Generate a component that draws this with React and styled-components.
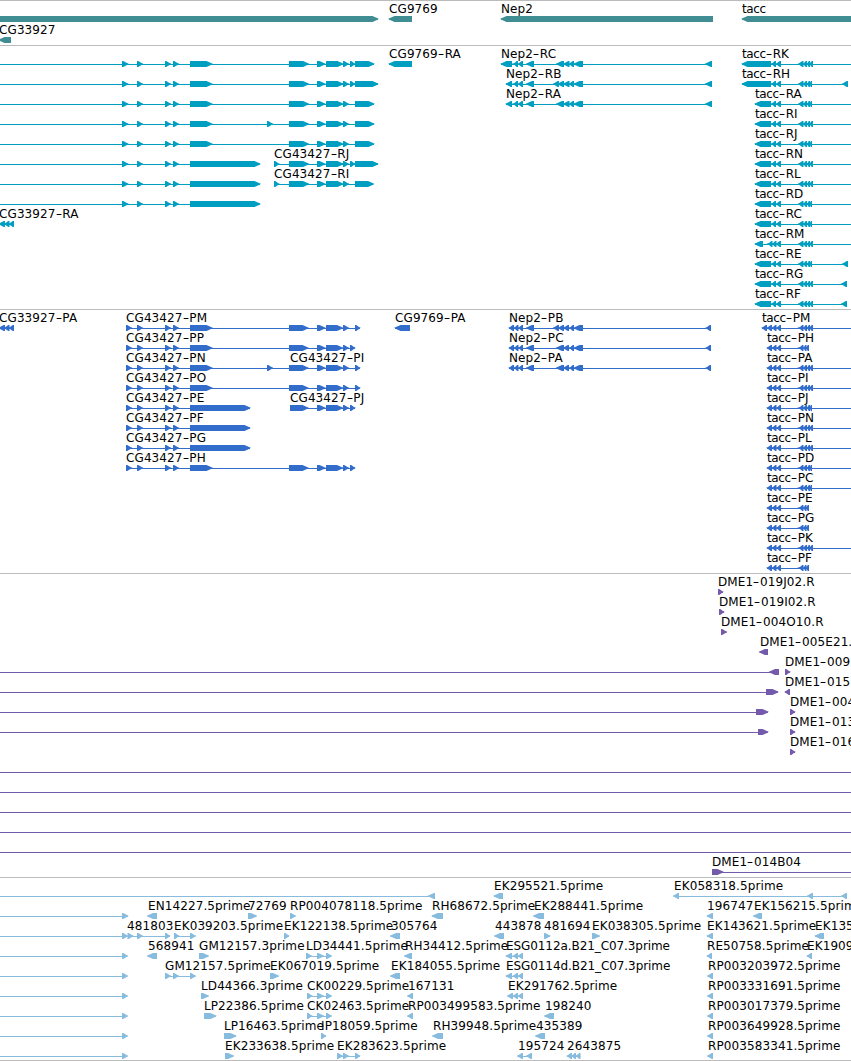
import React from 'react';
import styled, { createGlobalStyle } from 'styled-components';

const OFF = 870;

// feature helper: exons are given as "start,end start,end ..."
const feature = (dir, exons, label, opts = {}) => ({
  dir,
  label,
  exons: exons.split(' ').filter(Boolean).map(pair => pair.split(',').map(Number)),
  ...opts,
});
const fwd = (exons, label, opts) => feature('right', exons, label, opts);
const rev = (exons, label, opts) => feature('left', exons, label, opts);

const fromLeft = { from: -10 };
const toRight = { to: OFF };

const genes = [
  [
    fwd('-10,378'),
    rev('389,412', 'CG9769'),
    rev('501,713', 'Nep2'),
    rev(`742,${OFF}`, 'tacc'),
  ],
  [rev('-1,11', 'CG33927')],
];

const HEAD = '122,128 137,142.5 165,170.5 173,178.5';
const MID = '190,212';
const LONG = '190,260';
const TAIL = '289,308.5 317,325 326,343 343,348.5';
const NEP_R = '513.5,518 518,523 526.5,534';
const NEP_R_END = '563.5,569.5 569,574 574,583 705.5,712';
const CLUSTER = '798.5,803.5 803,807 806.5,810';
const taccR = (name, last, opts = toRight, end = '') => (
  rev(`755,771 771.5,776 776,781 ${CLUSTER} 809,${last} ${end}`, name, opts)
);

const transcripts = [
  [
    fwd(`${HEAD} ${MID} ${TAIL} 350,355 355,374`, null, fromLeft),
    rev('389,412', 'CG9769-RA'),
    rev(`501,512 ${NEP_R} 556.5,564 ${NEP_R_END}`, 'Nep2-RC'),
    rev(`742,771 771.5,776 776,781 ${CLUSTER} 809,813`, 'tacc-RK', toRight),
  ],
  [
    fwd(`${HEAD} ${MID} ${TAIL} 350,355 355,378`, null, fromLeft),
    rev(`506,512 ${NEP_R} 553.5,559 558,564 ${NEP_R_END}`, 'Nep2-RB'),
    rev(`742,771 771.5,776 776,781 ${CLUSTER} 809,812 842.5,848`, 'tacc-RH'),
  ],
  [
    fwd(`${HEAD} ${MID} ${TAIL} 355,374`, null, fromLeft),
    rev(`506,512 ${NEP_R} 556.5,564 ${NEP_R_END}`, 'Nep2-RA'),
    taccR('tacc-RA', 812),
  ],
  [
    fwd(`${HEAD} ${MID} 267,272.5 ${TAIL} 355,374`, null, fromLeft),
    taccR('tacc-RI', 813),
  ],
  [
    fwd(`${HEAD} ${MID} ${TAIL} 355,374`, null, fromLeft),
    taccR('tacc-RJ', 812),
  ],
  [
    fwd(`${HEAD} ${LONG}`, null, fromLeft),
    fwd(`274,279 ${TAIL} 350,355 355,378`, 'CG43427-RJ'),
    taccR('tacc-RN', 813),
  ],
  [
    fwd(`${HEAD} ${LONG}`, null, fromLeft),
    fwd(`274,279 ${TAIL} 355,373.5`, 'CG43427-RI'),
    taccR('tacc-RL', 813),
  ],
  [fwd(`${HEAD} ${LONG}`, null, fromLeft), taccR('tacc-RD', 812)],
  [rev('-1,5 4.5,9.5 9,14', 'CG33927-RA'), taccR('tacc-RC', 812)],
  [rev(`755,763 768,772.5 772,776.5 776,781 ${CLUSTER} 809,813`, 'tacc-RM', toRight)],
  [taccR('tacc-RE', 812, {}, '842.5,848')],
  [taccR('tacc-RG', 813, {}, '841.5,847')],
  [taccR('tacc-RF', 813, {}, '841.5,847')],
];

const P_HEAD = '126,131.5 137,142.5 165,170.5 173,178.5';
const P_TAIL = '317,325 326,342.5 343,348.5';
const P_NEP = '509,514 514,518.5 518.5,523 526.5,534';
const P_NEP_END = '563.5,569 569.5,574 574,583 706,711';
const P_TACC = '767,772 772,776.5 776.5,781';
const cgP = (name, end, extra = '') => (
  fwd(`${P_HEAD} ${MID} ${extra} 289,308 ${P_TAIL} ${end}`, name)
);
const cgShort = name => fwd(`${P_HEAD} 190,250`, name);
const taccP = (name, last) => (
  rev(`${P_TACC} 799,803.5 803,807 806.5,810 809,${last}`, name, toRight)
);
const taccShort = name => rev(`${P_TACC} 799,803.5 803,806.5 805.5,809`, name);

const proteins = [
  [
    rev('-1,5 4.5,9.5 9,14', 'CG33927-PA'),
    cgP('CG43427-PM', '355,360'),
    rev('395,410', 'CG9769-PA'),
    rev(`${P_NEP} 553.5,559 558.5,564 ${P_NEP_END}`, 'Nep2-PB'),
    rev(`762,767 ${P_TACC} 799,803.5 803,807 806.5,810 809,813`, 'tacc-PM', toRight),
  ],
  [
    cgP('CG43427-PP', '350,355'),
    rev(`${P_NEP} 556.5,564 ${P_NEP_END}`, 'Nep2-PC'),
    taccShort('tacc-PH'),
  ],
  [
    cgP('CG43427-PN', '355,360', '267,272.5'),
    fwd('', 'CG43427-PI', { at: 290 }),
    rev(`${P_NEP} 556.5,564 ${P_NEP_END}`, 'Nep2-PA'),
    taccP('tacc-PA', 813),
  ],
  [cgP('CG43427-PO', '355,360'), taccP('tacc-PI', 813)],
  [
    cgShort('CG43427-PE'),
    fwd(`290,308 ${P_TAIL} 350,355`, 'CG43427-PJ'),
    taccP('tacc-PJ', 812),
  ],
  [cgShort('CG43427-PF'), taccP('tacc-PN', 813)],
  [cgShort('CG43427-PG'), taccP('tacc-PL', 813)],
  [cgP('CG43427-PH', '350,355'), taccP('tacc-PD', 812)],
  [taccP('tacc-PC', 812)],
  [taccShort('tacc-PE')],
  [taccShort('tacc-PG')],
  [taccP('tacc-PK', 813)],
  [taccShort('tacc-PF')],
];

const spanning = [fwd('', null, { from: -10, to: OFF })];

const clones = [
  [fwd('718,723', 'DME1-019J02.R')],
  [fwd('719,724', 'DME1-019I02.R')],
  [fwd('721,726.5', 'DME1-004O10.R')],
  [rev('759.5,768', 'DME1-005E21.')],
  [rev('769.5,779', null, fromLeft), fwd('785,790', 'DME1-009')],
  [fwd('766,778', null, fromLeft), rev('785,790', 'DME1-015')],
  [fwd('756,768', null, fromLeft), fwd('790,795', 'DME1-004')],
  [fwd('758,768', null, fromLeft), fwd('790,795', 'DME1-013')],
  [fwd('790,795', 'DME1-016')],
  spanning,
  spanning,
  spanning,
  spanning,
  spanning,
  [fwd('712,723', 'DME1-014B04', toRight)],
];

const lead = fwd('122,127.5', null, fromLeft);

const ests = [
  [
    rev('428.5,435', null, fromLeft),
    rev('494,503', 'EK295521.5prime'),
    rev('673.5,679 807.5,813 841.5,847', 'EK058318.5prime'),
  ],
  [
    fwd('122,128', null, fromLeft),
    rev('147.5,157', 'EN14227.5prime'),
    fwd('248,256.5', '72769'),
    fwd('290,295.5', 'RP004078118.5prime'),
    rev('432,443', 'RH68672.5prime'),
    rev('533.5,544', 'EK288441.5prime'),
    rev('707,713', '196747'),
    rev('753.5,762', 'EK156215.5prime'),
  ],
  [
    lead,
    fwd('127.5,133 137,142.5 165,170', '481803', { at: 127 }),
    fwd('174,179 190,195.5', 'EK039203.5prime'),
    fwd('284,289', 'EK122138.5prime'),
    rev('390.5,400', '305764'),
    rev('494.5,504', '443878'),
    fwd('544,550', '481694'),
    fwd('592,599.5', 'EK038305.5prime'),
    rev('707,713', 'EK143621.5prime'),
    rev('815,824', 'EK135'),
  ],
  [
    lead,
    rev('147.5,157', '568941'),
    fwd('199,208.5', 'GM12157.3prime'),
    fwd('306,311.5 317,323.5 326,331.5', 'LD34441.5prime'),
    rev('404.5,412', 'RH34412.5prime'),
    rev('506,512 513,518 518,523', 'ESG0112a.B21_C07.3prime'),
    rev('707,712', 'RE50758.5prime'),
    rev('807,812', 'EK1909'),
  ],
  [
    lead,
    fwd('165,170.5 173,178.5 190,195.5', 'GM12157.5prime'),
    fwd('270,278.5', 'EK067019.5prime'),
    rev('390.5,400', 'EK184055.5prime'),
    rev('506,512 513,518 518,523', 'ESG0114d.B21_C07.3prime'),
    rev('707.5,713', 'RP003203972.5prime'),
  ],
  [
    lead,
    fwd('201,208.5', 'LD44366.3prime'),
    fwd('307,312 317,323.5 326,331.5', 'CK00229.5prime'),
    rev('407.5,413', '167131'),
    rev('507.5,513 513,518 518,523', 'EK291762.5prime'),
    rev('707.5,713', 'RP003331691.5prime'),
  ],
  [
    lead,
    fwd('204,216', 'LP22386.5prime'),
    fwd('307,312 317,323.5 326,331.5', 'CK02463.5prime'),
    rev('407.5,413', 'RP003499583.5prime'),
    rev('544.5,554', '198240'),
    rev('707.5,713', 'RP003017379.5prime'),
  ],
  [
    lead,
    fwd('224,236', 'LP16463.5prime'),
    fwd('321,326', 'IP18059.5prime'),
    rev('432.5,443', 'RH39948.5prime'),
    rev('535.5,545', '435389'),
    rev('707.5,713', 'RP003649928.5prime'),
  ],
  [
    lead,
    fwd('225,233.5', 'EK233638.5prime'),
    fwd('337,342.5 343,348.5 355,360', 'EK283623.5prime'),
    rev('517.5,523 526.5,532', '195724'),
    rev('567,572 571.5,576 576,580.5', '2643875'),
    rev('707.5,713', 'RP003583341.5prime'),
  ],
];

const tracks = [
  { id: 'genes', color: '#408e94', laneHeight: 21, lanes: genes },
  { id: 'transcripts', color: '#009fc1', lanes: transcripts, padEnd: 1 },
  { id: 'proteins', color: '#326dcc', lanes: proteins, padEnd: 1 },
  { id: 'clones', color: '#745aaa', lanes: clones, padEnd: 1 },
  { id: 'ests', color: '#88bcdf', lanes: ests },
];

// the arrow head keeps a blunt shoulder so that short exons stay solid
const exonPoints = ([x1, x2], dir) => {
  const head = Math.min(5.5, x2 - x1 - 1.2);
  const tip = x2 - x1 < 5 ? 1.8 : 0.8;
  return dir === 'right'
    ? `${x1},0 ${x2 - head},0 ${x2 - 1},2 ${x2 + tip},2.8 ${x2 - 1},4 ${x2 - head},6 ${x1},6`
    : `${x2},0 ${x1 + head},0 ${x1 + 1},2 ${x1 - tip},2.8 ${x1 + 1},4 ${x1 + head},6 ${x2},6`;
};

const Glyph = ({ item }) => {
  const { dir, exons } = item;
  const from = item.from ?? (exons.length ? exons[0][0] : 0);
  const to = item.to ?? (exons.length ? exons[exons.length - 1][1] : 0);

  return (
    <g>
      <rect x={from} y={3} width={to - from} height={1} />
      {exons.map(exon => (
        <polygon key={exon[0]} points={exonPoints(exon, dir)} />
      ))}
    </g>
  );
};

const Label = ({ item }) => {
  const [name, suffix] = item.label.split('-');
  const left = item.at ?? Math.round(item.exons[0][0]);

  return (
    <LabelText style={{ left }} $tight={name.length > 20}>
      {name === 'tacc' ? <Narrow>{name}</Narrow> : name}
      {suffix && <Hyphen>-</Hyphen>}
      {suffix}
    </LabelText>
  );
};

const App = () => (
  <>
    <GlobalStyle />
    <Browser>
      {tracks.map(track => (
        <Track key={track.id} $padEnd={track.padEnd}>
          {track.lanes.map((lane, index) => (
            <Lane key={index} $height={track.laneHeight}>
              <Labels>
                {lane.filter(item => item.label).map(item => (
                  <Label key={item.label} item={item} />
                ))}
              </Labels>
              <Glyphs $color={track.color}>
                {lane.map((item, i) => <Glyph key={i} item={item} />)}
              </Glyphs>
            </Lane>
          ))}
        </Track>
      ))}
    </Browser>
  </>
);

const GlobalStyle = createGlobalStyle`
  body {
    margin: 0;
    background: #fff;
    overflow: hidden;
  }
`;

const Browser = styled.main`
  width: 851px;
  display: flex;
  flex-direction: column;
  overflow: hidden;
  color: #000;
  font: 12px/13px 'DejaVu Sans', sans-serif;
  border-bottom: 1px solid #bbb;
`;

const Track = styled.section`
  display: flex;
  flex-direction: column;
  border-top: 1px solid #bbb;
  padding: 2px 0 ${props => props.$padEnd || 0}px;
`;

const Lane = styled.div`
  display: flex;
  flex-direction: column;
  height: ${props => props.$height || 20}px;
`;

const Labels = styled.div`
  position: relative;
  z-index: 1;
  flex: none;
  height: 13px;
`;

const LabelText = styled.span`
  position: absolute;
  top: 0;
  white-space: nowrap;
  letter-spacing: ${props => (props.$tight ? -0.08 : 0.1)}px;
`;

const Narrow = styled.span`
  letter-spacing: -0.35px;
`;

const Hyphen = styled.span`
  display: inline-block;
  width: 6.8px;
  transform: translateX(0.8px) scaleX(1.5);
  transform-origin: 30% 50%;
`;

const Glyphs = styled.svg`
  display: block;
  flex: none;
  width: 100%;
  height: 6px;
  fill: ${props => props.$color};
`;

export default App;
